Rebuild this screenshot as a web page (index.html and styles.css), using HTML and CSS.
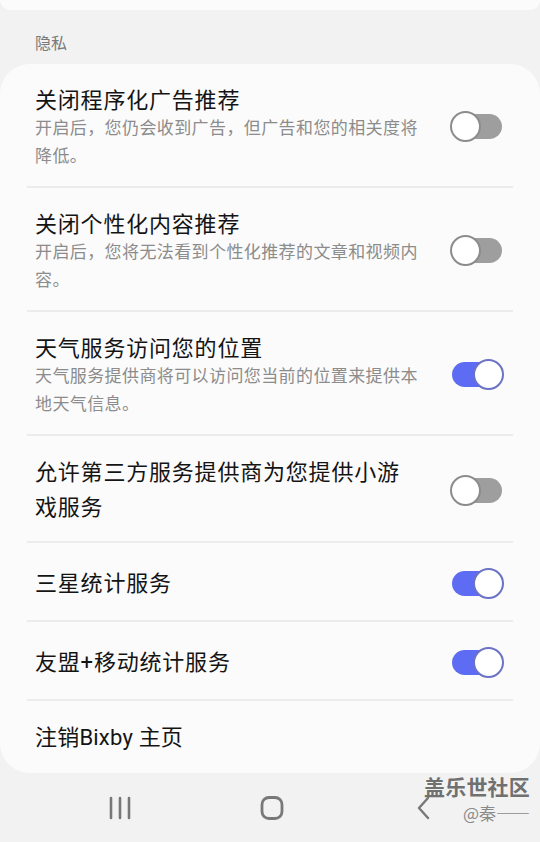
FILE: index.html
```html
<!DOCTYPE html>
<html lang="zh-CN">
<head>
<meta charset="utf-8">
<link rel="stylesheet" href="styles.css">
</head>
<body>
<div class="screen">
  <div class="top-card"></div>
  <div class="section-head">隐私</div>
  <div class="card">
    <div class="row">
      <div class="text">
        <div class="title">关闭程序化广告推荐</div>
        <div class="sub">开启后，您仍会收到广告，但广告和您的相关度将降低。</div>
      </div>
      <div class="toggle off"><span class="thumb"></span></div>
    </div>
    <div class="sep"></div>
    <div class="row">
      <div class="text">
        <div class="title">关闭个性化内容推荐</div>
        <div class="sub">开启后，您将无法看到个性化推荐的文章和视频内容。</div>
      </div>
      <div class="toggle off"><span class="thumb"></span></div>
    </div>
    <div class="sep"></div>
    <div class="row">
      <div class="text">
        <div class="title">天气服务访问您的位置</div>
        <div class="sub">天气服务提供商将可以访问您当前的位置来提供本地天气信息。</div>
      </div>
      <div class="toggle on"><span class="thumb"></span></div>
    </div>
    <div class="sep"></div>
    <div class="row">
      <div class="text">
        <div class="title">允许第三方服务提供商为您提供小游戏服务</div>
      </div>
      <div class="toggle off"><span class="thumb"></span></div>
    </div>
    <div class="sep"></div>
    <div class="row">
      <div class="text">
        <div class="title">三星统计服务</div>
      </div>
      <div class="toggle on"><span class="thumb"></span></div>
    </div>
    <div class="sep"></div>
    <div class="row">
      <div class="text">
        <div class="title">友盟+移动统计服务</div>
      </div>
      <div class="toggle on"><span class="thumb"></span></div>
    </div>
    <div class="sep"></div>
    <div class="row last">
      <div class="text">
        <div class="title">注销Bixby 主页</div>
      </div>
    </div>
  </div>
  <div class="navbar">
    <div class="nav-item">
      <svg width="24" height="26" viewBox="0 0 24 26"><g stroke="#787878" stroke-width="2.6" stroke-linecap="round"><line x1="3" y1="3" x2="3" y2="23"/><line x1="12" y1="3" x2="12" y2="23"/><line x1="21" y1="3" x2="21" y2="23"/></g></svg>
    </div>
    <div class="nav-item">
      <svg width="26" height="26" viewBox="0 0 26 26"><rect x="3" y="2.5" width="20" height="21" rx="7" fill="none" stroke="#787878" stroke-width="2.8"/></svg>
    </div>
    <div class="nav-item">
      <svg width="16" height="26" viewBox="0 0 16 26"><polyline points="12,3 3,13 12,23" fill="none" stroke="#787878" stroke-width="2.4" stroke-linecap="round" stroke-linejoin="round"/></svg>
    </div>
  </div>
  <div class="watermark">
    <div class="wm-main">盖乐世社区</div>
    <div class="wm-sub">@秦——</div>
  </div>
</div>
</body>
</html>
```
FILE: styles.css
```css
html, body {
  margin: 0;
  padding: 0;
  background: #f2f2f2;
}
.screen {
  position: relative;
  width: 540px;
  height: 842px;
  overflow: hidden;
  background: #f2f2f2;
  font-family: Roboto, "Noto Sans CJK SC", sans-serif;
}
.top-card {
  height: 10px;
  background: #fbfbfb;
  border-radius: 0 0 28px 28px;
}
.section-head {
  padding: 24px 35px 10px;
  font-size: 16px;
  line-height: 20px;
  color: #7a7a7a;
}
.card {
  background: #fbfbfb;
  border-radius: 30px;
  padding: 0 27px;
}
.row {
  display: flex;
  align-items: center;
  box-sizing: border-box;
  min-height: 77px;
  padding: 19px 11px 16px 8px;
}
.row.last {
  min-height: 72px;
  padding-top: 0;
  padding-bottom: 0;
}
.text {
  flex: 1;
  min-width: 0;
}
.title {
  font-size: 22px;
  line-height: 35px;
  letter-spacing: 0.8px;
  color: #141414;
}
.row.last .title {
  letter-spacing: 0.2px;
}
.sub {
  margin-top: -4px;
  font-size: 17px;
  line-height: 28px;
  letter-spacing: 0.4px;
  color: #8c8c8c;
}
.sep {
  height: 2px;
  background: #ececec;
}
.toggle {
  position: relative;
  flex: none;
  width: 50px;
  height: 25px;
  margin-left: 32px;
  border-radius: 13px;
}
.toggle.off {
  background: #9e9e9e;
}
.toggle.on {
  background: #5d6cf3;
}
.thumb {
  position: absolute;
  top: -3px;
  width: 27px;
  height: 27px;
  border-radius: 50%;
  background: #fff;
  border: 2px solid #8c8c8c;
}
.toggle.off .thumb {
  left: -2px;
}
.toggle.on .thumb {
  right: -2px;
  border-color: #6b72c4;
}
.navbar {
  display: flex;
  justify-content: center;
  align-items: center;
  padding: 22px 0 0 4px;
}
.nav-item {
  width: 152px;
  height: 26px;
  display: flex;
  justify-content: center;
  align-items: center;
}
.watermark {
  position: absolute;
  right: 10px;
  top: 773px;
  text-align: right;
  font-family: "Noto Sans CJK SC", sans-serif;
}
.wm-main {
  font-size: 21px;
  line-height: 26px;
  font-weight: bold;
  color: #707070;
  letter-spacing: 0.2px;
}
.wm-sub {
  margin-top: 3px;
  font-size: 17px;
  line-height: 22px;
  color: #8a8a8a;
}
```
